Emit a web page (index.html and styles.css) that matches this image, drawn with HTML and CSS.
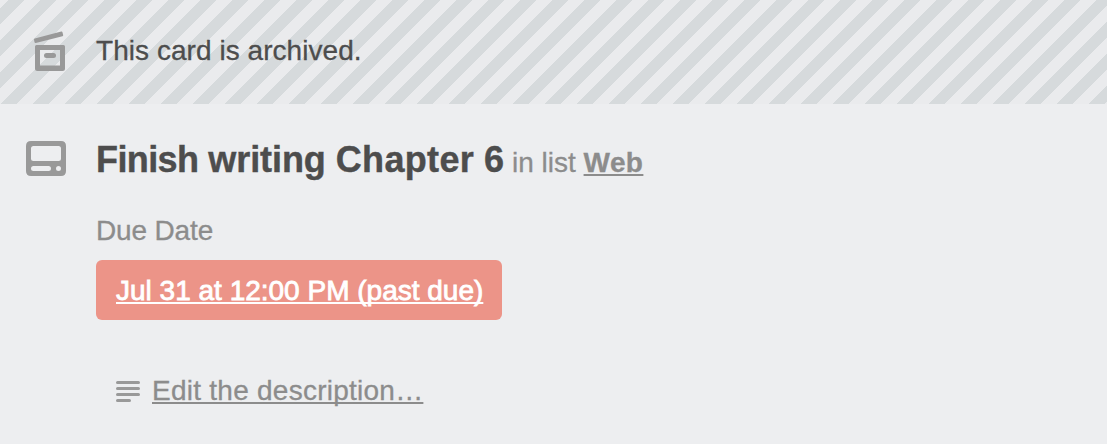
FILE: index.html
```html
<!DOCTYPE html>
<html lang="en">
<head>
<meta charset="utf-8">
<title>Finish writing Chapter 6</title>
<link rel="stylesheet" href="styles.css">
</head>
<body>
<main class="card">
  <div class="banner">
    <svg class="banner-icon" width="32" height="40" viewBox="0 0 32 40">
      <path d="M1 9.500 27.500 2.500 28.200 5.200 1.500 12Z" fill="#999" stroke="#999" stroke-width="2" stroke-linejoin="round"/>
      <path d="M1 16.500Q1 15 2.500 15H29.500Q31 15 31 16.500V38.500Q31 41 28.500 41H3.500Q1 41 1 38.500ZM6 20V35.500H26V20Z" fill="#999" fill-rule="evenodd"/>
      <rect x="10" y="23" width="12" height="5" rx="2.500" fill="#999"/>
    </svg>
    <p class="banner-text">This card is archived.</p>
  </div>
  <header class="heading">
    <svg class="card-icon" width="40" height="36" viewBox="0 0 40 36">
      <path fill="#999" fill-rule="evenodd" d="M5 0H35Q40 0 40 5V30Q40 35 35 35H5Q0 35 0 30V5Q0 0 5 0ZM7.500 5Q5 5 5 7.500V17.500Q5 20 7.500 20H32.500Q35 20 35 17.500V7.500Q35 5 32.500 5ZM7.500 25A2.500 2.500 0 0 0 7.500 30H22.500A2.500 2.500 0 0 0 22.500 25ZM32.500 25A2.500 2.500 0 0 0 32.500 30A2.500 2.500 0 0 0 32.500 25Z"/>
    </svg>
    <h1 class="title"><span class="title-start">Finish</span> writing <span class="title-end">Chapter</span> 6</h1>
    <p class="list-info">in list <a class="list-link">Web</a></p>
  </header>
  <section class="due">
    <h2 class="due-label">Due Date</h2>
    <div class="due-badge"><a class="due-link">Jul 31 at 12:00 PM (past due)</a></div>
  </section>
  <div class="description">
    <svg class="description-icon" width="24" height="22" viewBox="0 0 24 22" stroke="#999" stroke-width="3" stroke-linecap="round">
      <path d="M1.500 1.500H22.500M1.500 7.500H22.500M1.500 13.500H22.500M1.500 19.500H13.500"/>
    </svg>
    <a class="description-link">Edit the description…</a>
  </div>
</main>
</body>
</html>
```
FILE: styles.css
```css
* { box-sizing: border-box; margin: 0; padding: 0; }

body {
  background: #edeef0;
  color: #4d4d4d;
  font-family: "Liberation Sans", Helvetica, Arial, sans-serif;
  font-size: 28px;
  line-height: 32px;
  overflow: hidden;
}

.card { height: 444px; white-space: nowrap; }
.card svg { display: block; flex: none; }

.banner {
  display: flex;
  height: 104px;
  padding: 30px 34px;
  gap: 30px;
  background-image: linear-gradient(135deg,
    #eaebed 12.5%, #d6dadc 12.5%, #d6dadc 37.5%,
    #eaebed 37.5%, #eaebed 62.5%,
    #d6dadc 62.5%, #d6dadc 87.5%, #eaebed 87.5%);
  background-size: 32px 32px;
}

.banner-icon { overflow: visible; }
.banner-text { padding-top: 5px; letter-spacing: 0.05px; -webkit-text-stroke: 0.3px; }

.heading { display: flex; align-items: baseline; padding: 36px 26px 0; height: 109px; }
.card-icon { align-self: flex-start; margin: 1px 30px 0 0; }
.title { width: 408px; font-size: 36px; line-height: 40px; letter-spacing: -0.08px; -webkit-text-stroke: 0.4px; }
.title-start { letter-spacing: -0.6px; }
.title-end { letter-spacing: 0.35px; }
.list-info { margin-left: 8px; color: #8c8c8c; -webkit-text-stroke: 0.3px; }
.list-link {
  font-weight: bold;
  letter-spacing: 0.4px;
  text-decoration: underline;
  text-decoration-thickness: 2px;
  text-underline-offset: 2px;
  text-decoration-skip-ink: none;
}

.due { padding-left: 96px; color: #8c8c8c; }
.due-label { font-size: 28px; font-weight: normal; padding-top: 2px; letter-spacing: -0.15px; -webkit-text-stroke: 0.3px; }
.due-badge {
  width: 406px;
  height: 60px;
  margin-top: 13px;
  padding: 15px 20px;
  border-radius: 6px;
  background: #ec9488;
  color: #fff;
}
.due-link, .description-link {
  text-decoration: underline;
  text-decoration-thickness: 2px;
  text-underline-offset: 2px;
  text-decoration-skip-ink: none;
}
.due-link { -webkit-text-stroke: 0.8px; }

.description { display: flex; gap: 12px; padding: 55px 0 0 116px; color: #8c8c8c; }
.description-icon { margin-top: 6px; }
.description-link { letter-spacing: 0.25px; -webkit-text-stroke: 0.3px; }
```
